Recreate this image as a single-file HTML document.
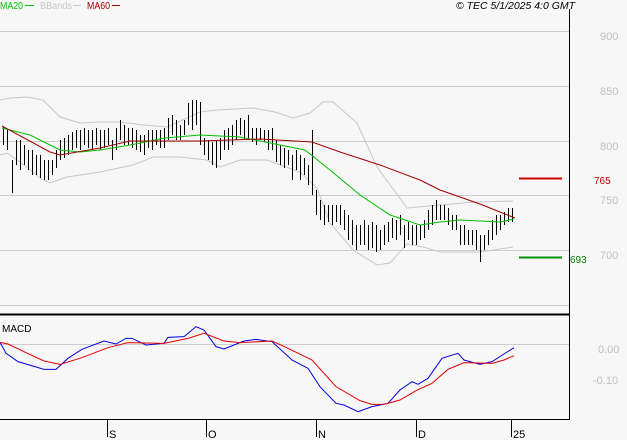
<!DOCTYPE html>
<html><head><meta charset="utf-8"><style>
html,body{margin:0;padding:0;background:#f7f7f7;width:627px;height:440px;overflow:hidden}
svg{display:block;font-family:"Liberation Sans",sans-serif}
</style></head><body>
<svg width="627" height="440" viewBox="0 0 627 440" xmlns="http://www.w3.org/2000/svg">
<rect width="627" height="440" fill="#f7f7f7"/>
<!-- header -->
<text x="0" y="9" font-size="10" fill="#00c000" textLength="23" lengthAdjust="spacingAndGlyphs">MA20</text>
<line x1="25" y1="5.5" x2="34" y2="5.5" stroke="#00c000"/>
<text x="40" y="9" font-size="10" fill="#c8c8c8" textLength="32" lengthAdjust="spacingAndGlyphs">BBands</text>
<line x1="73" y1="5.5" x2="81" y2="5.5" stroke="#c8c8c8"/>
<text x="87" y="9" font-size="10" fill="#a00000" textLength="23" lengthAdjust="spacingAndGlyphs">MA60</text>
<line x1="112" y1="5.5" x2="120" y2="5.5" stroke="#a00000"/>
<text x="456" y="9" font-size="10" font-style="italic" fill="#000" textLength="119" lengthAdjust="spacingAndGlyphs">© TEC 5/1/2025 4:0 GMT</text>
<!-- grid -->
<g stroke="#cccccc" stroke-width="1">
<line x1="0" y1="31.5" x2="569" y2="31.5"/>
<line x1="0" y1="86.5" x2="569" y2="86.5"/>
<line x1="0" y1="141.5" x2="569" y2="141.5"/>
<line x1="0" y1="195.5" x2="569" y2="195.5"/>
<line x1="0" y1="250.5" x2="569" y2="250.5"/>
<line x1="0" y1="305.5" x2="569" y2="305.5"/>
<line x1="0" y1="344.5" x2="569" y2="344.5"/>
</g>
<g font-size="11" fill="#c0c0c0">
<text x="600" y="40">900</text><text x="600" y="95">850</text><text x="600" y="150">800</text>
<text x="600" y="204">750</text><text x="600" y="259">700</text>
<text x="598" y="353">0.00</text><text x="593" y="384">-0.10</text>
</g>
<line x1="569.5" y1="9" x2="569.5" y2="419" stroke="#000"/>
<line x1="0" y1="314.5" x2="569" y2="314.5" stroke="#000" stroke-width="2"/>
<line x1="0" y1="419.5" x2="570" y2="419.5" stroke="#000"/>
<g stroke="#000"><line x1="107.5" y1="420" x2="107.5" y2="437"/><line x1="206.5" y1="420" x2="206.5" y2="437"/><line x1="316.5" y1="420" x2="316.5" y2="437"/><line x1="416.5" y1="420" x2="416.5" y2="437"/><line x1="511.5" y1="420" x2="511.5" y2="437"/></g>
<g font-size="11" fill="#000"><text x="109" y="438">S</text><text x="208" y="438">O</text><text x="318" y="438">N</text><text x="418" y="438">D</text><text x="513" y="438">25</text></g>
<!-- levels -->
<line x1="519" y1="178.5" x2="562" y2="178.5" stroke="#d00000" stroke-width="2"/>
<text x="594" y="184" font-size="10" fill="#c00000">765</text>
<line x1="519" y1="257.5" x2="562" y2="257.5" stroke="#009000" stroke-width="2"/>
<text x="570" y="263" font-size="10" fill="#008000">693</text>
<!-- bbands -->
<g fill="none" stroke="#c8c8c8" stroke-width="1">
<polyline points="0,100 10,98 27,97 43,100 60,117 80,123 100,122 120,122 143,125 167,127 187,118 200,112 217,110 253,108 275,112 293,118 310,113 323,102 333,102 357,123 377,167 407,208 440,205 475,202 513,201"/>
<polyline points="0,155 7,153 20,162 40,178 50,183 67,177 100,172 133,165 153,157 180,157 207,160 220,167 240,160 267,160 300,172 317,188 330,223 353,250 377,265 390,263 407,244 423,247 440,252 480,252 513,247"/>
</g>
<!-- bars -->
<path stroke="#000" stroke-width="1" fill="none" d="M3.5 127V145M7.5 130V150M12.5 160V193M16.5 140V165M20.5 140V170M24.5 145V165M28.5 150V170M32.5 150V175M36.5 155V175M40.5 155V178M44.5 160V180M48.5 160V180M52.5 160V175M56.5 150V168M60.5 140V160M64.5 138V158M68.5 135V155M72.5 132V150M76.5 130V148M80.5 130V150M84.5 128V145M88.5 130V148M92.5 130V150M96.5 128V145M100.5 130V150M104.5 130V148M108.5 128V145M112.5 140V160M116.5 128V150M120.5 120V140M124.5 125V145M128.5 128V145M132.5 128V148M136.5 130V150M140.5 135V152M144.5 135V155M148.5 130V148M152.5 130V150M156.5 130V145M160.5 130V148M164.5 128V148M168.5 118V140M172.5 115V135M176.5 120V140M180.5 125V140M184.5 120V135M188.5 103V125M192.5 100V130M196.5 100V125M200.5 102V145M204.5 138V155M208.5 140V160M212.5 142V165M216.5 140V168M220.5 138V160M224.5 130V150M228.5 128V150M232.5 125V145M236.5 120V140M240.5 118V135M244.5 120V140M248.5 115V140M252.5 128V142M256.5 128V145M260.5 128V140M264.5 130V142M268.5 130V150M272.5 128V150M276.5 140V162M280.5 145V165M284.5 148V168M288.5 150V165M292.5 155V180M296.5 150V170M300.5 155V180M304.5 158V175M308.5 165V185M312.5 130V195M316.5 190V215M320.5 200V220M324.5 205V225M328.5 205V222M332.5 205V225M336.5 205V222M340.5 205V225M344.5 210V230M348.5 215V240M352.5 220V245M356.5 225V250M360.5 225V245M364.5 220V245M368.5 225V250M372.5 222V248M376.5 225V252M380.5 230V250M384.5 225V245M388.5 222V242M392.5 218V238M396.5 220V240M400.5 215V235M404.5 225V248M408.5 222V240M412.5 225V245M416.5 225V245M420.5 225V240M424.5 220V238M428.5 210V230M432.5 205V225M436.5 200V220M440.5 205V220M444.5 205V220M448.5 208V225M452.5 215V230M456.5 215V230M460.5 225V245M464.5 225V245M468.5 230V245M472.5 230V245M476.5 230V250M480.5 235V262M484.5 235V250M488.5 230V245M492.5 220V240M496.5 215V235M500.5 215V230M504.5 212V225M508.5 208V222M512.5 208V222"/>
<!-- MAs -->
<polyline fill="none" stroke="#00c000" stroke-width="1" points="2,128 30,135 60,150 80,152 100,150 130,145 165,138 200,135 240,137 280,145 305,150 330,170 360,195 390,215 420,225 440,222 460,220 480,221 500,222 514,219"/>
<polyline fill="none" stroke="#a00000" stroke-width="1" points="2,126 50,152 60,155 100,148 130,141 200,141 260,139 312,142 340,152 380,165 420,180 440,190 480,204 500,212 515,218"/>
<!-- MACD -->
<text x="2" y="332" font-size="10" fill="#000">MACD</text>
<g transform="translate(0,280) scale(0.4,0.33333)" fill="none">
<polyline stroke="#0000e0" stroke-width="1" vector-effect="non-scaling-stroke" points="0,187 15,220 45,245 110,268 140,268 170,235 205,208 260,183 290,192 315,175 330,175 365,195 410,190 420,172 460,170 490,140 510,150 540,200 560,207 610,183 640,178 680,185 730,240 770,265 800,320 840,370 860,375 895,395 930,380 970,370 1000,330 1030,305 1045,313 1070,295 1105,235 1145,220 1160,240 1200,253 1230,245 1260,222 1285,203"/>
<polyline stroke="#e00000" stroke-width="1" vector-effect="non-scaling-stroke" points="0,187 20,192 60,215 110,243 150,253 200,235 270,203 320,188 410,190 470,175 510,160 560,183 600,188 680,183 720,205 780,240 840,320 900,362 930,373 960,373 1000,360 1040,332 1080,310 1120,268 1160,248 1230,250 1260,240 1285,227"/>
</g>
</svg>
</body></html>
